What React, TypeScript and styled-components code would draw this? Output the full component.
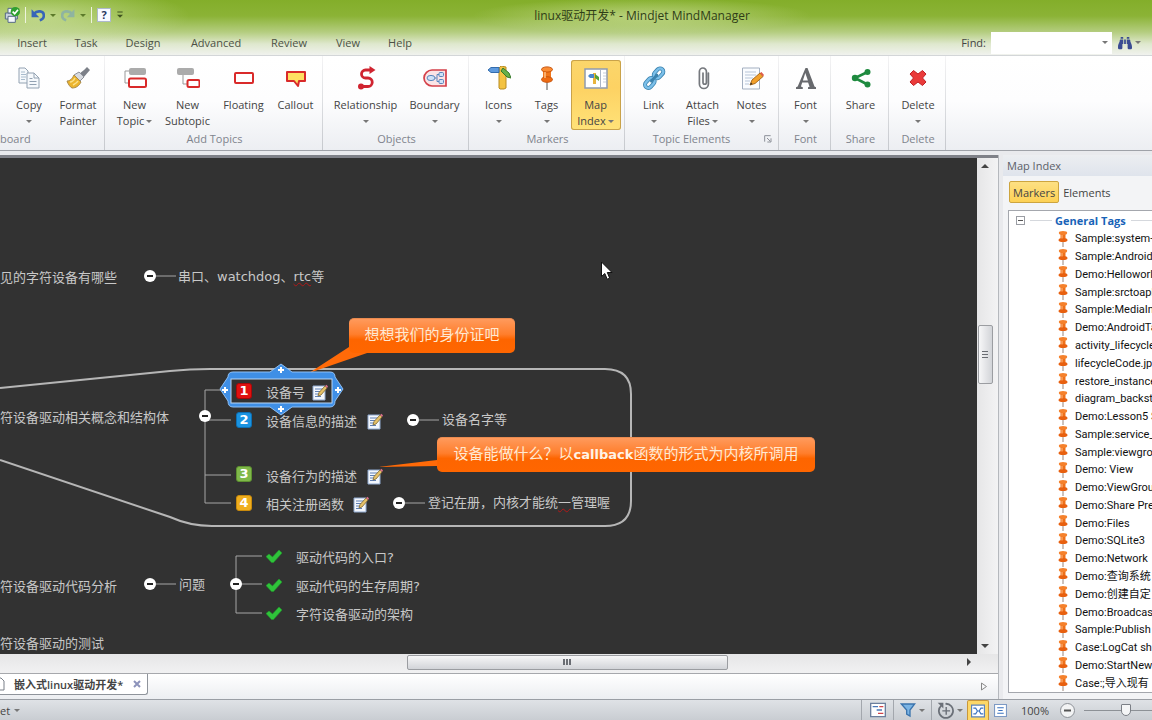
import React from "react";
import styled, { createGlobalStyle, css } from "styled-components";
import { FaBinoculars } from "react-icons/fa";

const UI = `"Open Sans", "Noto Sans CJK SC", sans-serif`;
const LIST = `Roboto, "Noto Sans CJK SC", sans-serif`;
const MAP = `"DejaVu Sans", "Noto Sans CJK SC", sans-serif`;

const GlobalStyle = createGlobalStyle`
  * { box-sizing: border-box; }
  body { margin: 0; overflow: hidden; font-family: ${UI}; font-size: 11px; color: #444; }
  button, input { font: inherit; color: inherit; margin: 0; }
  button { padding: 0; border: 0; background: none; }
  ul { list-style: none; margin: 0; padding: 0; }
  svg { display: block; flex: none; }
`;

const Window = styled.div`
  display: flex;
  flex-direction: column;
  height: 100vh;
  background: #e9eaed;
`;

/* ---------- title bar and tabs ---------- */

const Header = styled.header`
  background:
    radial-gradient(ellipse 150px 30px at 40px 16px, rgba(225, 238, 190, 0.6), transparent),
    radial-gradient(ellipse 170px 18px at 642px 16px, rgba(215, 230, 170, 0.6), transparent),
    linear-gradient(#83ae2a 0, #8bb336 16px, #b4cd7f 32px, #dfe8ce 44px, #f0f2ee 55px);
  border-bottom: 1px solid #d3d6d8;
  flex: none;
`;

const TitleBar = styled.div`
  display: flex;
  align-items: center;
  height: 30px;
`;

const QuickTools = styled.div`
  display: flex;
  align-items: center;
  gap: 5px;
  width: 132px;
  padding-left: 4px;
`;

const QuickDivider = styled.span`
  width: 1px;
  height: 16px;
  background: #eef4dd;
`;

const HelpBox = styled.button`
  width: 14px;
  height: 14px;
  line-height: 12px;
  border: 1px solid #aeb9cc;
  background: #f7f9ff;
  color: #26365e;
  font-weight: 700;
`;

const Title = styled.h1`
  flex: 1;
  margin: 0;
  padding-top: 2px;
  text-align: center;
  font-size: 12px;
  line-height: 20px;
  font-weight: 400;
  color: #2f3d17;
`;

const MenuBar = styled.nav`
  display: flex;
  align-items: center;
  height: 25px;
  padding-left: 3px;
`;

const MenuTab = styled.button<{ $w: number }>`
  width: ${(p) => p.$w}px;
  height: 25px;
  line-height: 24px;
  color: #4c5145;
`;

const FindArea = styled.div`
  display: flex;
  align-items: center;
  margin-left: auto;
  gap: 5px;
  padding-right: 11px;
`;

const FindBox = styled.span`
  display: flex;
  align-items: center;
  width: 121px;
  height: 22px;
  padding-right: 4px;
  background: #fff;
  input { flex: 1; min-width: 0; height: 20px; border: 0; outline: 0; background: none; }
`;

const FindButton = styled.button`
  display: flex;
  align-items: center;
  gap: 3px;
  margin-left: 1px;
  color: #3a4c92;
`;

const Caret = styled.i<{ $c?: string }>`
  display: inline-block;
  flex: none;
  width: 0;
  height: 0;
  vertical-align: middle;
  border: 3px solid transparent;
  border-top-color: ${(p) => p.$c || "#777"};
  border-bottom-width: 0;
`;

/* ---------- ribbon ---------- */

const Ribbon = styled.section`
  display: flex;
  flex: none;
  height: 95px;
  background: linear-gradient(#fff 0, #fdfdfe 45px, #eceef2 94px);
  border-bottom: 1px solid #9fa2a8;
`;

const Group = styled.div<{ $w: number }>`
  position: relative;
  display: flex;
  flex-direction: column;
  width: ${(p) => p.$w}px;
  padding: 4px 0 0 2px;
  border-right: 1px solid;
  border-image: linear-gradient(#f4f4f5, #c5c8cd) 1;
`;

const GroupButtons = styled.div`
  display: flex;
  justify-content: center;
  height: 71px;
`;

const GroupLabel = styled.div<{ $launcher?: boolean }>`
  display: flex;
  justify-content: center;
  padding-right: ${(p) => (p.$launcher ? 22 : 0)}px;
  line-height: 16px;
  color: #80848d;
`;

const ClippedLabel = styled(GroupLabel)`
  justify-content: flex-start;
  margin-left: -2px;
`;

const Launcher = styled.button`
  position: absolute;
  right: 6px;
  bottom: 7px;
  width: 8px;
  height: 8px;
`;

const Tool = styled.button<{ $w: number; $on?: boolean }>`
  display: flex;
  flex-direction: column;
  align-items: center;
  width: ${(p) => p.$w}px;
  height: 70px;
  padding-top: 6px;
  border-radius: 3px;
  line-height: 16px;
  white-space: nowrap;
  ${(p) =>
    p.$on &&
    css`
      background: linear-gradient(#fbd66b, #fdd263 40%, #ffe278);
      box-shadow: inset 0 0 0 1px #c9a24a;
    `}
  svg { margin-bottom: 7px; }
`;

const ToolLine = styled.span`
  display: flex;
  align-items: center;
  gap: 2px;
  height: 16px;
`;

/* ---------- workspace ---------- */

const Workspace = styled.main`
  display: flex;
  flex: 1;
  min-height: 0;
  padding-top: 4px;
`;

const Editor = styled.section`
  display: flex;
  flex-direction: column;
  flex: 1;
  min-width: 0;
  border-right: 1px solid #b5b8bd;
`;

const CanvasRow = styled.div`
  display: flex;
  flex: 1;
  min-height: 0;
  border-top: 3px solid #7f8188;
`;

const Canvas = styled.div`
  position: relative;
  flex: 1;
  min-width: 0;
  overflow: hidden;
  background: #323232;
`;

const VBar = styled.div`
  display: flex;
  flex-direction: column;
  align-items: center;
  justify-content: space-between;
  width: 21px;
  padding: 6px 5px 6px 0;
  background: linear-gradient(90deg, #e6e6e7, #f3f3f4);
`;

const HBar = styled.div`
  display: flex;
  align-items: center;
  flex: none;
  height: 20px;
  padding-bottom: 3px;
  background: linear-gradient(#e6e6e7, #f1f1f2);
  border-bottom: 1px solid #a6a8ac;
`;

const HTrack = styled.div`
  flex: 1;
  display: grid;
  grid-template-columns: 406fr 320fr 239fr;
`;

const Thumb = styled.div<{ $vertical?: boolean }>`
  display: flex;
  flex-direction: ${(p) => (p.$vertical ? "column" : "row")};
  align-items: center;
  justify-content: center;
  gap: 1px;
  border: 1px solid #9b9da1;
  border-radius: 2px;
  background: linear-gradient(${(p) => (p.$vertical ? "90deg, " : "")}#f7f7f8, #d2d4d8);
  ${(p) => (p.$vertical ? "width: 15px; height: 59px;" : "grid-column: 2; height: 15px;")}
`;

const Grip = styled.i<{ $vertical?: boolean }>`
  background: #6a6d73;
  ${(p) => (p.$vertical ? "width: 6px; height: 1px; margin-bottom: 1px;" : "width: 2px; height: 6px;")}
`;

const Arrow = styled.button<{ $dir: "up" | "down" | "right" }>`
  width: 0;
  height: 0;
  border: 4px solid transparent;
  ${(p) => p.$dir === "up" && "border-bottom-color: #444; border-top-width: 0;"}
  ${(p) => p.$dir === "down" && "border-top-color: #444; border-bottom-width: 0;"}
  ${(p) => p.$dir === "right" && "border-left-color: #444; border-right-width: 0; margin-right: 27px;"}
`;

const ThumbSlot = styled.div`
  display: flex;
  align-items: flex-start;
  flex: 1;
  padding-top: 157px;
`;

const DocTabs = styled.div`
  display: flex;
  align-items: flex-start;
  justify-content: space-between;
  flex: none;
  height: 25px;
  background: linear-gradient(#fff, #eceef1);
`;

const DocTab = styled.div`
  display: flex;
  align-items: center;
  height: 21px;
  width: 148px;
  padding-right: 5px;
  gap: 9px;
  background: #fff;
  border: 1px solid #8f949b;
  border-width: 0 1px 1px 0;
  border-radius: 0 0 3px 0;
  font-weight: 600;
  white-space: nowrap;
`;

const CloseButton = styled.button`
  width: 9px;
  margin-left: auto;
`;

const TabScroll = styled.button`
  padding: 8px 11px 0 0;
`;

/* ---------- mind map ---------- */

const MapLines = styled.svg`
  position: absolute;
  left: 0;
  top: 0;
`;

const place = css<{ $x: number; $y: number }>`
  position: absolute;
  left: ${(p) => p.$x}px;
  top: ${(p) => p.$y}px;
`;

const Topic = styled.div<{ $x: number; $y: number }>`
  ${place}
  font-family: ${MAP};
  font-size: 13px;
  line-height: 20px;
  white-space: nowrap;
  color: #c8c8c8;
`;

const Misspelt = styled.u`
  text-decoration: underline wavy #b01818 1px;
`;

const Callout = styled.div<{ $x: number; $y: number; $w: number }>`
  ${place}
  width: ${(p) => p.$w}px;
  height: 35px;
  border-radius: 5px;
  border-top: 1px solid #e98a50;
  background: linear-gradient(#ff9a5c, #ff7e2c 45%, #fd6500 60%, #ff6600);
  font-family: ${MAP};
  font-size: 15px;
  line-height: 32px;
  text-align: center;
  white-space: nowrap;
  color: #ffe9d2;
  b { font-size: 13px; color: #fff3e6; }
`;

const Badge = styled.span<{ $x: number; $y: number; $c: string; $edge: string }>`
  ${place}
  width: 16px;
  height: 16px;
  border-radius: 3px;
  border: 1px solid ${(p) => p.$edge};
  background: ${(p) => p.$c};
  font-family: "DejaVu Sans", sans-serif;
  font-size: 13px;
  line-height: 14px;
  font-weight: 700;
  text-align: center;
  color: #fff;
`;

const Mark = styled.span<{ $x: number; $y: number }>`
  ${place}
`;

/* ---------- map index ---------- */

const Panel = styled.aside`
  display: flex;
  flex-direction: column;
  width: 149px;
  margin-left: 4px;
  overflow: hidden;
  background: #f3f4f6;
`;

const PanelTitle = styled.h2`
  margin: 0;
  padding: 2px 4px;
  font-size: 11px;
  line-height: 17px;
  font-weight: 400;
  color: #5b6068;
  background: linear-gradient(#eceef1, #dfe4ec);
`;

const PanelTabs = styled.div`
  display: flex;
  padding: 5px 6px 7px 6px;
`;

const PanelTab = styled.button<{ $on?: boolean }>`
  height: 22px;
  padding: 0 4px;
  white-space: nowrap;
  ${(p) =>
    p.$on &&
    css`
      padding: 0 3px;
      border: 1px solid #cda53f;
      border-radius: 2px;
      background: linear-gradient(#fde083, #fdd155);
    `}
`;

const TagBox = styled.div`
  display: flex;
  flex-direction: column;
  flex: 1;
  min-height: 0;
  margin: 0 0 6px 5px;
  border: 1px solid #a4a7ad;
  border-right: 0;
  background: #fff;
`;

const TagHeading = styled.div`
  display: grid;
  grid-template-columns: 9px 22px auto 1fr;
  align-items: center;
  column-gap: 5px;
  height: 19px;
  padding-left: 7px;
  white-space: nowrap;
`;

const Rule = styled.i`
  height: 1px;
  background: #d5d8dd;
`;

const TagName = styled.h3`
  margin: 0 0 0 -2px;
  font-size: 11px;
  line-height: 18px;
  font-weight: 700;
  color: #1763b8;
`;

const Expander = styled.button`
  width: 9px;
  height: 9px;
  padding: 3px 1px;
  border: 1px solid #9a9da3;
  background: #555 content-box;
`;

const TagList = styled.ul`
  display: grid;
  grid-auto-rows: 1fr;
  flex: 1;
  min-height: 0;
  padding-left: 49px;
`;

const TagItem = styled.li`
  display: flex;
  align-items: center;
  gap: 7px;
  min-height: 0;
  font-family: ${LIST};
  font-size: 11px;
  line-height: 17px;
  white-space: nowrap;
  color: #111;
`;

/* ---------- status bar ---------- */

const StatusBar = styled.footer`
  display: flex;
  align-items: center;
  flex: none;
  height: 21px;
  background: linear-gradient(#dfe2e6, #c9cdd2);
  border-top: 1px solid #9a9ea4;
`;

const StatusText = styled.span`
  display: flex;
  align-items: center;
  gap: 4px;
`;

const StatusTools = styled.div`
  display: flex;
  align-items: center;
  align-self: stretch;
  margin-left: auto;
`;

const StatusCell = styled.button<{ $w: number; $line?: boolean }>`
  display: flex;
  align-items: center;
  justify-content: center;
  align-self: stretch;
  gap: 3px;
  width: ${(p) => p.$w}px;
  border-left: ${(p) => (p.$line ? "1px solid #a3a7ad" : "0")};
`;

const ViewButton = styled.button<{ $on?: boolean }>`
  display: flex;
  align-items: center;
  justify-content: center;
  align-self: stretch;
  width: 22px;
  ${(p) =>
    p.$on &&
    css`
      background: #fdd767;
      border: 1px solid #c9973a;
      border-bottom: 0;
      border-radius: 2px 2px 0 0;
    `}
`;

const Zoom = styled.label`
  width: 48px;
  text-align: center;
`;

const ZoomSlider = styled.input`
  appearance: none;
  width: 68px;
  height: 16px;
  margin: 0 0 0 8px;
  background: linear-gradient(#8d9196, #8d9196) center / 100% 1px no-repeat;
  &::-webkit-slider-thumb {
    appearance: none;
    width: 10px;
    height: 12px;
    border: 1px solid #7b7f86;
    border-radius: 1px 1px 5px 5px;
    background: #f4f5f6;
  }
`;

/* ---------- icons ---------- */

const Svg = ({ s = 24, children }: { s?: number; children: React.ReactNode }) => (
  <svg width={s} height={s} viewBox="0 0 24 24" fill="none" aria-hidden="true">
    {children}
  </svg>
);

const icons: Record<string, React.ReactNode> = {
  copy: (
    <Svg>
      <path d="M2 2h6l3 3v12H2z" fill="#f6f9fc" stroke="#93a2b2" />
      <path d="M4 6h4M4 8.500h5M4 11h5M4 13.500h4" stroke="#a9bccd" />
      <path d="M10 7h7l5 5v10H10z" fill="#f6f9fc" stroke="#93a2b2" />
      <path d="M17 7v5h5M12.500 12.500h3M12.500 15.500h7M12.500 18.500h7" stroke="#93a2b2" />
    </Svg>
  ),
  painter: (
    <Svg>
      <path d="M21 1l3 3-7 8-4-4 5-4z" fill="#7c8088" />
      <path d="M13 6l5 5-4 4-6-6z" fill="#d7dadf" stroke="#8d9199" />
      <path d="M8 9l7 7c-2 4-5 6-9 6-2-1-4-4-5-7 3 0 5-2 7-6z" fill="#ecb42c" stroke="#a98a4a" />
      <path d="M4 16c2 0 4-2 5-4M7 19c2-1 4-2 5-4" stroke="#fbe08a" strokeWidth="1.500" />
    </Svg>
  ),
  topic: (
    <Svg>
      <rect x="6" y="2" width="17" height="7" rx="2" fill="#ababab" />
      <path d="M6 5H2v12h4" stroke="#999" />
      <rect x="6" y="12.500" width="17" height="8.500" rx="1.500" fill="#fff" stroke="#d92a2a" strokeWidth="2" />
    </Svg>
  ),
  subtopic: (
    <Svg>
      <rect x="1" y="2" width="17" height="7" rx="2" fill="#ababab" />
      <path d="M7 9v9h4" stroke="#999" />
      <rect x="11.500" y="14" width="12" height="7" rx="1.500" fill="#fff" stroke="#d92a2a" strokeWidth="2" />
    </Svg>
  ),
  floating: (
    <Svg>
      <rect x="3" y="7" width="18" height="10" rx="1" fill="#fff" stroke="#d92a2a" strokeWidth="2" />
    </Svg>
  ),
  callout: (
    <Svg>
      <path d="M3 6h18v9h-6l-1 5-4-5H3z" fill="#ffdf62" stroke="#d92a2a" strokeWidth="2" strokeLinejoin="round" />
    </Svg>
  ),
  relation: (
    <Svg>
      <path d="M18 4h-6.500a4 4 0 0 0 0 8H14a4.200 4.200 0 0 1 0 8.500H6" stroke="#d02430" strokeWidth="2.800" />
      <path d="M15.500 0l6 4-6 4z" fill="#d02430" />
      <circle cx="7" cy="20.500" r="3" fill="#d02430" />
    </Svg>
  ),
  boundary: (
    <Svg>
      <path d="M9 4h14v16H9c-4 0-8-3.500-8-8s4-8 8-8z" fill="#fbe4e6" stroke="#d4404a" strokeWidth="1.700" />
      <ellipse cx="8" cy="12" rx="4" ry="2.600" fill="#cfe2f7" stroke="#5b86bd" />
      <rect x="16" y="6.500" width="4.500" height="4" rx="1" fill="#cfe2f7" stroke="#5b86bd" />
      <rect x="16" y="13.500" width="4.500" height="4" rx="1" fill="#cfe2f7" stroke="#5b86bd" />
      <path d="M12 12h1.500M16 8.500h-2v7h2" stroke="#5b86bd" />
    </Svg>
  ),
  icons: (
    <Svg>
      <path d="M12 2l2-2 5 1v21l-2 1h-4l-1-1z" fill="#f3c242" stroke="#b98c22" />
      <path d="M1 4l3-2.500h8v5H4z" fill="#5e9ade" stroke="#336cad" />
      <path d="M16 2l6 5 2 5-4-1-6-6z" fill="#68b04a" stroke="#35792a" />
    </Svg>
  ),
  tags: (
    <Svg>
      <path d="M12 16v8" stroke="#8b8b8b" strokeWidth="1.500" />
      <path d="M8 4h8v9H8z" fill="#f0761c" />
      <ellipse cx="12" cy="13.500" rx="5.500" ry="2.800" fill="#ed6a12" stroke="#c9540b" />
      <ellipse cx="12" cy="3.500" rx="5.500" ry="2.600" fill="#fb8c33" stroke="#c9540b" />
      <path d="M10 6v6" stroke="#ffc185" strokeWidth="1.500" />
    </Svg>
  ),
  index: (
    <Svg>
      <rect x="1" y="3" width="22" height="19" fill="#fff" stroke="#8e9aae" strokeWidth="1.500" />
      <path d="M16.500 4v17" stroke="#a9b4c6" />
      <path d="M19 7h3M19 10h3M19 13h3M19 16h3" stroke="#c5cdd9" />
      <path d="M9 7h3v11H9z" fill="#e9b43c" />
      <path d="M4 10l2-2h4v4H6z" fill="#4a86cf" />
      <path d="M11 8l4 3v4l-4-3z" fill="#55a03a" />
    </Svg>
  ),
  link: (
    <Svg>
      <g transform="rotate(-48 12 12)" strokeLinecap="round">
        <rect x="0" y="9" width="11" height="6.500" rx="3.200" stroke="#3b82ae" strokeWidth="4" />
        <rect x="13" y="9" width="11" height="6.500" rx="3.200" stroke="#3b82ae" strokeWidth="4" />
        <rect x="0" y="9" width="11" height="6.500" rx="3.200" stroke="#7cc0ea" strokeWidth="2.400" />
        <rect x="13" y="9" width="11" height="6.500" rx="3.200" stroke="#7cc0ea" strokeWidth="2.400" />
        <path d="M8 12.200h8" stroke="#3b82ae" strokeWidth="3" />
      </g>
    </Svg>
  ),
  attach: (
    <Svg>
      <path
        d="M12 7v9.500a1.700 1.700 0 0 0 3.400 0V5.500a3.500 3.500 0 0 0-7 0V18a4.500 4.500 0 0 0 9 0V7"
        stroke="#75787d"
        strokeWidth="1.700"
        strokeLinecap="round"
      />
    </Svg>
  ),
  notes: (
    <Svg>
      <path d="M2.500 2h17v21h-17z" fill="#fafcff" stroke="#a3afc0" />
      <path d="M5 6h11M5 9h11M5 12h8M5 15h5M5 18h4" stroke="#b7c5d8" />
      <path d="M10 19l2-5 8-7 3 3.500-8 7z" fill="#f2a02b" stroke="#aa6a1c" />
      <path d="M20 7l3 3.500 1-1.500-2.500-3z" fill="#e05a4a" />
      <path d="M10 19l1-2.500 1.500 1.500z" fill="#333" />
    </Svg>
  ),
  font: (
    <Svg>
      <path
        d="M11.500 2h2l7 18.500 1.500.8V23h-8v-1.700l1.600-.6-1.500-4.200H8.200l-1.300 4 1.900.8V23H2v-1.700l1.700-.8zM11.300 7l-2.400 7.500h5z"
        fill="#67696d"
      />
    </Svg>
  ),
  share: (
    <Svg>
      <path d="M18.500 6L6 12l12.500 6.500" stroke="#1e8a3f" strokeWidth="2.600" />
      <circle cx="18.500" cy="6" r="3" fill="#1e8a3f" />
      <circle cx="6" cy="12" r="3.200" fill="#1e8a3f" />
      <circle cx="18.500" cy="18.500" r="3" fill="#1e8a3f" />
    </Svg>
  ),
  remove: (
    <Svg>
      <path
        d="M7.500 4.500L12 8l4.500-3.500L20 8l-3.500 4 3.500 4-3.500 3.500L12 16l-4.500 3.500L4 16l3.500-4L4 8z"
        fill="#ea3a3a"
        stroke="#c01f25"
        strokeLinejoin="round"
      />
    </Svg>
  ),
};

const Pin = () => (
  <svg width="10" height="16" viewBox="0 0 10 16" aria-hidden="true">
    <path d="M5 10v6" stroke="#9a8478" />
    <path d="M2.500 2h5v6.500h-5z" fill="#ee701a" />
    <ellipse cx="5" cy="9" rx="4.500" ry="2" fill="#e8600f" />
    <ellipse cx="5" cy="2" rx="4.200" ry="1.900" fill="#f5812c" />
    <path d="M4 4v3.500" stroke="#ffbd86" />
  </svg>
);

const NoteIcon = () => (
  <svg width="16" height="17" viewBox="0 0 16 17" aria-hidden="true">
    <path d="M1 2h12v14H1z" fill="#f3f7fd" stroke="#8fa9cf" />
    <path d="M3 5h8M3 7.500h7M3 10h4M3 12.500h6" stroke="#5f7fb3" />
    <path d="M6 12l1-3.500L13 2l2 2-6 7z" fill="#e6c168" stroke="#7b6630" strokeWidth=".8" />
    <path d="M13 2l1.500-1.200L16 2.500 15 4z" fill="#d9708a" />
  </svg>
);

const Check = () => (
  <svg width="16" height="14" viewBox="0 0 16 14" aria-hidden="true">
    <path d="M3 5l3.500 3L13 1l3 3-8.500 9.500h-2L0 7.500z" fill="#2fc33a" stroke="#1f9a2a" strokeWidth=".6" />
  </svg>
);

/* ---------- data ---------- */

const tabs: [string, number][] = [
  ["Insert", 58],
  ["Task", 50],
  ["Design", 64],
  ["Advanced", 82],
  ["Review", 64],
  ["View", 54],
  ["Help", 50],
];

type ToolDef = { icon: string; w: number; lines: string[]; caret?: boolean; on?: boolean };
const groups: { label: string; w: number; tools: ToolDef[]; launcher?: boolean }[] = [
  {
    label: "board",
    w: 105,
    tools: [
      { icon: "copy", w: 50, lines: ["Copy"], caret: true },
      { icon: "painter", w: 48, lines: ["Format", "Painter"] },
    ],
  },
  {
    label: "Add Topics",
    w: 218,
    tools: [
      { icon: "topic", w: 50, lines: ["New", "Topic"], caret: true },
      { icon: "subtopic", w: 56, lines: ["New", "Subtopic"] },
      { icon: "floating", w: 56, lines: ["Floating"] },
      { icon: "callout", w: 48, lines: ["Callout"] },
    ],
  },
  {
    label: "Objects",
    w: 146,
    tools: [
      { icon: "relation", w: 76, lines: ["Relationship"], caret: true },
      { icon: "boundary", w: 62, lines: ["Boundary"], caret: true },
    ],
  },
  {
    label: "Markers",
    w: 156,
    tools: [
      { icon: "icons", w: 48, lines: ["Icons"], caret: true },
      { icon: "tags", w: 48, lines: ["Tags"], caret: true },
      { icon: "index", w: 50, lines: ["Map", "Index"], caret: true, on: true },
    ],
  },
  {
    label: "Topic Elements",
    w: 154,
    launcher: true,
    tools: [
      { icon: "link", w: 48, lines: ["Link"], caret: true },
      { icon: "attach", w: 50, lines: ["Attach", "Files"], caret: true },
      { icon: "notes", w: 48, lines: ["Notes"], caret: true },
    ],
  },
  { label: "Font", w: 52, tools: [{ icon: "font", w: 48, lines: ["Font"], caret: true }] },
  { label: "Share", w: 58, tools: [{ icon: "share", w: 48, lines: ["Share"] }] },
  { label: "Delete", w: 57, tools: [{ icon: "remove", w: 48, lines: ["Delete"], caret: true }] },
];

const topics: [number, number, string][] = [
  [0, 110, "见的字符设备有哪些"],
  [0, 250, "符设备驱动相关概念和结构体"],
  [266, 225, "设备号"],
  [266, 254, "设备信息的描述"],
  [266, 309, "设备行为的描述"],
  [266, 337, "相关注册函数"],
  [442, 252, "设备名字等"],
  [0, 419, "符设备驱动代码分析"],
  [179, 417, "问题"],
  [296, 390, "驱动代码的入口?"],
  [296, 419, "驱动代码的生存周期?"],
  [296, 447, "字符设备驱动的架构"],
  [0, 476, "符设备驱动的测试"],
];

const badges: [number, string, string, string][] = [
  [225, "1", "#e01010", "#a80808"],
  [254, "2", "#1a93e0", "#0d6fb3"],
  [308, "3", "#7fb84a", "#5d9130"],
  [337, "4", "#efae1e", "#c98a0c"],
];

const noteMarks: [number, number][] = [
  [312, 226],
  [367, 255],
  [367, 310],
  [353, 338],
];

const joints: [number, number][] = [
  [150, 118],
  [205, 258],
  [413, 262],
  [399, 345],
  [150, 426],
  [236, 426],
];

const handles: [number, number][] = [
  [281, 212],
  [281, 251],
  [225, 232],
  [338, 232],
];

const tagNames = [
  "Sample:system-a",
  "Sample:Android",
  "Demo:Helloworld",
  "Sample:srctoapk",
  "Sample:MediaInv",
  "Demo:AndroidTa",
  "activity_lifecycle",
  "lifecycleCode.jpg",
  "restore_instance",
  "diagram_backsta",
  "Demo:Lesson5 S",
  "Sample:service_",
  "Sample:viewgrou",
  "Demo: View",
  "Demo:ViewGroup",
  "Demo:Share Pre",
  "Demo:Files",
  "Demo:SQLite3",
  "Demo:Network",
  "Demo:查询系统",
  "Demo:创建自定",
  "Demo:Broadcast",
  "Sample:Publish a",
  "Case:LogCat sho",
  "Demo:StartNew.",
  "Case:;导入现有",
];

/* ---------- parts ---------- */

const ToolButton = ({ icon, w, lines, caret, on }: ToolDef) => (
  <Tool $w={w} $on={on} aria-pressed={on}>
    {icons[icon]}
    <ToolLine>{lines[0]}</ToolLine>
    <ToolLine>
      {lines[1]}
      {caret && <Caret />}
    </ToolLine>
  </Tool>
);

const MindMap = () => (
  <Canvas>
    <MapLines width="977" height="496" fill="none">
      <path
        d="M0 230L170 213Q190 211 210 211H605Q631 211 631 236V343Q631 368 605 368H212Q190 368 170 359L0 302"
        stroke="#b6b6b6"
        strokeWidth="2"
      />
      <path
        d="M156 118h20M230 232h-25v113h26M205 262h26M205 317h26M419 262h20M405 345h20M156 426h20M262 398h-26v57h26M236 426h26"
        stroke="#a5a5a5"
      />
      <path d="M349 189L309 215 370 194zM437 302L378 309 437 308z" fill="#ff6a08" />
      <path
        d="M233 214h37l11-8 11 8h38q5 0 5 5l8 12-8 12q0 6-5 6h-38l-11 8-11-8h-37q-5 0-5-6l-8-12 8-12q0-5 5-5z"
        fill="#3f8fe6"
        stroke="#8fc0f5"
      />
      <rect x="231" y="221" width="101" height="24" fill="#323232" stroke="#b8d6f5" />
      {handles.map(([x, y]) => (
        <path key={`${x}-${y}`} d={`M${x - 3} ${y}h6M${x} ${y - 3}v6`} stroke="#fff" strokeWidth="2" />
      ))}
      {joints.map(([x, y]) => (
        <g key={`${x}-${y}`}>
          <circle cx={x} cy={y} r="6" fill="#fff" />
          <path d={`M${x - 3} ${y}h6`} stroke="#222" strokeWidth="2" />
        </g>
      ))}
    </MapLines>
    {topics.map(([x, y, text]) => (
      <Topic key={text} $x={x} $y={y}>
        {text}
      </Topic>
    ))}
    <Topic $x={178} $y={109}>
      串口、watchdog、<Misspelt>rtc</Misspelt>等
    </Topic>
    <Topic $x={428} $y={335}>
      登记在册，内核才能统<Misspelt>一</Misspelt>管理喔
    </Topic>
    {badges.map(([y, n, c, edge]) => (
      <Badge key={n} $x={236} $y={y} $c={c} $edge={edge}>
        {n}
      </Badge>
    ))}
    {noteMarks.map(([x, y]) => (
      <Mark key={`${x}-${y}`} $x={x} $y={y}>
        <NoteIcon />
      </Mark>
    ))}
    {[391, 420, 448].map((y) => (
      <Mark key={y} $x={266} $y={y}>
        <Check />
      </Mark>
    ))}
    <Callout $x={349} $y={160} $w={166}>
      想想我们的身份证吧
    </Callout>
    <Callout $x={437} $y={279} $w={378}>
      设备能做什么？以<b>callback</b>函数的形式为内核所调用
    </Callout>
    <Mark $x={601} $y={103}>
      <svg width="12" height="19" viewBox="0 0 12 19" aria-hidden="true">
        <path d="M.5 1v14.500l3.300-3 2.400 5.700 2.500-1L6.300 11.500H11z" fill="#fff" stroke="#111" />
      </svg>
    </Mark>
  </Canvas>
);

export default function App() {
  return (
    <>
      <GlobalStyle />
      <Window>
        <Header>
          <TitleBar>
            <QuickTools>
              <Svg s={16}>
                <path d="M2 9h18v9H2z" fill="#c9d2df" stroke="#566a86" strokeWidth="1.500" />
                <path d="M6 2h10v7H6zM6 14h11v9H6z" fill="#f4f7fb" stroke="#566a86" strokeWidth="1.500" />
                <circle cx="17" cy="7" r="7" fill="#2fa02f" />
                <path d="M13 7l3 3 5-6" stroke="#fff" strokeWidth="2.500" />
              </Svg>
              <QuickDivider />
              <Svg s={14}>
                <path d="M5 10c5-6 17-6 17 3 0 4-3 7-7 8" stroke="#3765b8" strokeWidth="4.500" />
                <path d="M1 2v14h13z" fill="#3765b8" />
              </Svg>
              <Caret $c="#5c7a2a" />
              <Svg s={14}>
                <path d="M19 10C14 4 2 4 2 13c0 4 3 7 7 8" stroke="#8fb4a0" strokeWidth="4.500" />
                <path d="M23 2v14H10z" fill="#8fb4a0" />
              </Svg>
              <Caret $c="#5c7a2a" />
              <QuickDivider />
              <HelpBox>?</HelpBox>
              <Svg s={8}>
                <path d="M4 3h16" stroke="#3f5320" strokeWidth="3" />
                <path d="M3 11h18l-9 9z" fill="#3f5320" />
              </Svg>
            </QuickTools>
            <Title>linux驱动开发* - Mindjet MindManager</Title>
          </TitleBar>
          <MenuBar>
            {tabs.map(([name, w]) => (
              <MenuTab key={name} $w={w}>
                {name}
              </MenuTab>
            ))}
            <FindArea>
              <label htmlFor="find">Find:</label>
              <FindBox>
                <input id="find" type="text" />
                <Caret />
              </FindBox>
              <FindButton aria-label="Find">
                <FaBinoculars size={14} />
                <Caret />
              </FindButton>
            </FindArea>
          </MenuBar>
        </Header>

        <Ribbon>
          {groups.map((g) => (
            <Group key={g.label} $w={g.w}>
              <GroupButtons>
                {g.tools.map((t) => (
                  <ToolButton key={t.icon} {...t} />
                ))}
              </GroupButtons>
              {g.label === "board" ? (
                <ClippedLabel>{g.label}</ClippedLabel>
              ) : (
                <GroupLabel $launcher={g.launcher}>{g.label}</GroupLabel>
              )}
              {g.launcher && (
                <Launcher aria-label="More">
                  <Svg s={8}>
                    <path d="M2 20V2h18M9 9l10 10M21 10v11H10" stroke="#8d9199" strokeWidth="3" />
                  </Svg>
                </Launcher>
              )}
            </Group>
          ))}
        </Ribbon>

        <Workspace>
          <Editor>
            <CanvasRow>
              <MindMap />
              <VBar>
                <Arrow $dir="up" aria-label="Scroll up" />
                <ThumbSlot>
                  <Thumb $vertical>
                    <Grip $vertical />
                    <Grip $vertical />
                    <Grip $vertical />
                  </Thumb>
                </ThumbSlot>
                <Arrow $dir="down" aria-label="Scroll down" />
              </VBar>
            </CanvasRow>
            <HBar>
              <HTrack>
                <Thumb>
                  <Grip />
                  <Grip />
                  <Grip />
                </Thumb>
              </HTrack>
              <Arrow $dir="right" aria-label="Scroll right" />
            </HBar>
            <DocTabs>
              <DocTab>
                <svg width="5" height="14" viewBox="0 0 5 14" fill="none" aria-hidden="true">
                  <path d="M0 1h1l3 3v9H0" stroke="#7a8089" />
                </svg>
                嵌入式linux驱动开发*
                <CloseButton aria-label="Close">
                  <svg width="8" height="8" viewBox="0 0 8 8" aria-hidden="true">
                    <path d="M1 1l6 6M7 1L1 7" stroke="#8d93bb" strokeWidth="2" />
                  </svg>
                </CloseButton>
              </DocTab>
              <TabScroll aria-label="Next tab">
                <svg width="6" height="9" viewBox="0 0 6 9" fill="none" aria-hidden="true">
                  <path d="M.5 1v7l5-3.500z" stroke="#888" />
                </svg>
              </TabScroll>
            </DocTabs>
          </Editor>

          <Panel>
            <PanelTitle>Map Index</PanelTitle>
            <PanelTabs>
              <PanelTab $on>Markers</PanelTab>
              <PanelTab>Elements</PanelTab>
            </PanelTabs>
            <TagBox>
              <TagHeading>
                <Expander aria-label="Collapse" />
                <Rule />
                <TagName>General Tags</TagName>
                <Rule />
              </TagHeading>
              <TagList>
                {tagNames.map((t) => (
                  <TagItem key={t}>
                    <Pin />
                    {t}
                  </TagItem>
                ))}
              </TagList>
            </TagBox>
          </Panel>
        </Workspace>

        <StatusBar>
          <StatusText>
            et <Caret />
          </StatusText>
          <StatusTools>
            <StatusCell $w={32} $line aria-label="Filter view">
              <Svg s={16}>
                <path d="M1 2h22v20H1z" fill="#fff" stroke="#6c7f9d" strokeWidth="2" />
                <path d="M4 7h8M10 12h8" stroke="#4a78b8" strokeWidth="2" />
                <path d="M14 7h6M12 17h8" stroke="#d0444a" strokeWidth="2" />
              </Svg>
            </StatusCell>
            <StatusCell $w={38} $line aria-label="Filter">
              <Svg s={16}>
                <path d="M2 3h20l-7 9v9l-5-3v-6z" fill="#7bb4e4" stroke="#3b74ad" strokeWidth="2" />
              </Svg>
              <Caret />
            </StatusCell>
            <StatusCell $w={36} $line aria-label="Rotate">
              <Svg s={17}>
                <path d="M6 5a10 10 0 1 0 6-2.500" stroke="#6b7078" strokeWidth="2.500" />
                <path d="M13 7v11M7.500 12.500h11" stroke="#6b7078" strokeWidth="2" />
                <path d="M1 1h8v8z" fill="#6b7078" />
              </Svg>
              <Caret />
            </StatusCell>
            <ViewButton $on aria-label="Map view">
              <Svg s={14}>
                <path d="M1 2h22v20H1z" fill="#fff" stroke="#5d83bb" strokeWidth="2" />
                <path d="M4 7h4l3 5h3l3-5h4M4 17h4l3-5h3l3 5h4" stroke="#3a73c0" strokeWidth="2" />
              </Svg>
            </ViewButton>
            <ViewButton aria-label="Outline view">
              <Svg s={13}>
                <path d="M1 1h22v22H1z" fill="#fff" stroke="#7d9ac4" strokeWidth="2" />
                <path d="M6 7h12M8 12h8M6 17h12" stroke="#3a73c0" strokeWidth="2" />
              </Svg>
            </ViewButton>
            <Zoom htmlFor="zoom">100%</Zoom>
            <button aria-label="Zoom out">
              <svg width="17" height="17" viewBox="0 0 17 17" aria-hidden="true">
                <circle cx="8.500" cy="8.500" r="7" fill="#f2f3f4" stroke="#8c9096" />
                <path d="M5 8.500h7" stroke="#555" strokeWidth="2" />
              </svg>
            </button>
            <ZoomSlider id="zoom" type="range" defaultValue={64} />
          </StatusTools>
        </StatusBar>
      </Window>
    </>
  );
}
